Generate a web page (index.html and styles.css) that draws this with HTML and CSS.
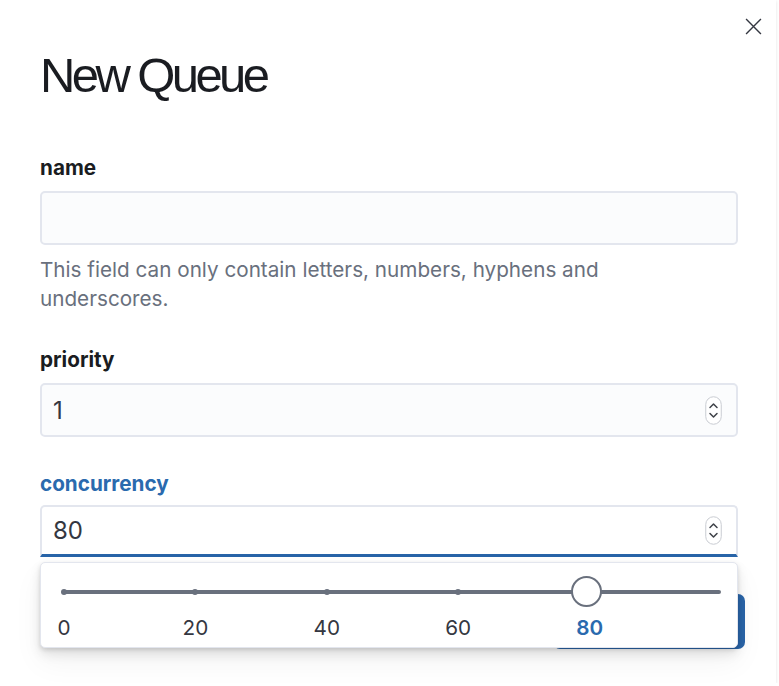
FILE: index.html
```html
<!DOCTYPE html>
<html lang="en">
<head>
    <meta charset="UTF-8">
    <meta name="viewport" content="width=device-width, initial-scale=1.0">
    <title>New Queue</title>
    <link rel="stylesheet" href="styles.css">
</head>
<body>
    <div class="modal">
        <button class="close" aria-label="Close">
            <svg width="17" height="17" viewBox="0 0 16 16"><path d="M1 1 L15 15 M15 1 L1 15" stroke="#343741" stroke-width="1.3" fill="none"/></svg>
        </button>
        <h1 class="title">New Queue</h1>

        <form class="form">
            <div class="row">
                <label class="label" for="name">name</label>
                <div class="field">
                    <input class="input" id="name" type="text">
                </div>
                <div class="help">This field can only contain letters, numbers, hyphens and underscores.</div>
            </div>

            <div class="row">
                <label class="label" for="priority">priority</label>
                <div class="field">
                    <input class="input" id="priority" type="text" value="1">
                    <span class="spinner">
                        <svg width="17" height="29" viewBox="0 0 17 29"><rect x="0.75" y="0.75" width="15.5" height="27.5" rx="7.75" fill="#fff" stroke="#c9ccd2" stroke-width="1"/><path d="M5 11.5 L8.5 8 L12 11.5 M5 17.5 L8.5 21 L12 17.5" stroke="#3f4249" stroke-width="1.5" fill="none" stroke-linecap="round" stroke-linejoin="round"/></svg>
                    </span>
                </div>
            </div>

            <div class="row focused">
                <label class="label" for="concurrency">concurrency</label>
                <div class="field">
                    <input class="input" id="concurrency" type="text" value="80">
                    <span class="spinner">
                        <svg width="17" height="29" viewBox="0 0 17 29"><rect x="0.75" y="0.75" width="15.5" height="27.5" rx="7.75" fill="#fff" stroke="#c9ccd2" stroke-width="1"/><path d="M5 11.5 L8.5 8 L12 11.5 M5 17.5 L8.5 21 L12 17.5" stroke="#3f4249" stroke-width="1.5" fill="none" stroke-linecap="round" stroke-linejoin="round"/></svg>
                    </span>
                </div>
                <div class="popover">
                    <div class="range">
                        <div class="track"></div>
                        <span class="tick" style="left: 0%"></span>
                        <span class="tick" style="left: 20%"></span>
                        <span class="tick" style="left: 40%"></span>
                        <span class="tick" style="left: 60%"></span>
                        <span class="thumb" style="left: 80%"></span>
                    </div>
                    <div class="ticks">
                        <span class="tick-label" style="left: 0%">0</span>
                        <span class="tick-label" style="left: 20%">20</span>
                        <span class="tick-label" style="left: 40%">40</span>
                        <span class="tick-label" style="left: 60%">60</span>
                        <span class="tick-label active" style="left: 80%">80</span>
                    </div>
                </div>
            </div>
        </form>

        <div class="footer">
            <button class="button primary" type="button">Create</button>
        </div>
    </div>
</body>
</html>
```

FILE: styles.css
```css
body {
    font-family: Inter, "Noto Sans", sans-serif;
    margin: 0;
    background-color: #fff;
    color: #343741;
}
.modal {
    position: relative;
    width: 776px;
    height: 683px;
    padding: 46px 38px 0 40px;
    box-sizing: border-box;
    background-color: #fff;
    box-shadow: 0 1px 3px rgba(0, 0, 0, 0.12);
    overflow: hidden;
}
.close {
    position: absolute;
    top: 14px;
    right: 11px;
    width: 24px;
    height: 24px;
    padding: 0;
    border: none;
    background: none;
    display: flex;
    align-items: center;
    justify-content: center;
    cursor: pointer;
}
.title {
    margin: 0;
    font-family: "Liberation Sans", Arial, sans-serif;
    font-weight: 400;
    font-size: 49px;
    line-height: 58px;
    letter-spacing: -3.6px;
    color: #1a1c21;
}
.form {
    margin-top: 52px;
}
.row {
    position: relative;
    margin-bottom: 35px;
}
.row:last-child {
    margin-bottom: 0;
}
.label {
    display: block;
    font-size: 20.7px;
    font-weight: 700;
    line-height: 24px;
    color: #1a1c21;
    margin-bottom: 11px;
}
.row.focused .label {
    color: #2a6aae;
    margin-bottom: 9px;
}
.field {
    display: flex;
    align-items: center;
    height: 54px;
    padding: 0 14px 0 11px;
    box-sizing: border-box;
    background-color: #fbfcfd;
    border: 2px solid #e3e6ee;
    border-radius: 5px;
}
.row.focused .field {
    height: 52px;
    background-color: #fff;
    border-bottom: 3px solid #2864a8;
    border-radius: 5px 5px 0 0;
}
.input {
    flex: 1;
    min-width: 0;
    border: none;
    outline: none;
    background: transparent;
    padding: 0;
    font-family: Inter, "Noto Sans", sans-serif;
    font-size: 24px;
    color: #343741;
}
.spinner {
    display: flex;
}
.help {
    max-width: 670px;
    margin-top: 10px;
    font-size: 20.7px;
    line-height: 29px;
    color: #69707d;
}
.popover {
    position: absolute;
    top: calc(100% + 5px);
    left: 0;
    right: 0;
    height: 86px;
    box-sizing: border-box;
    padding: 18px 16px 0 23px;
    background-color: #fff;
    border: 1px solid #e3e6ee;
    border-radius: 5px;
    box-shadow: 0 6px 12px rgba(0, 0, 0, 0.1), 0 2px 4px rgba(0, 0, 0, 0.12), 0 14px 30px rgba(0, 0, 0, 0.05);
    z-index: 2;
}
.range {
    position: relative;
    height: 22px;
}
.track {
    position: absolute;
    top: 9px;
    left: -1px;
    right: 0;
    height: 4px;
    border-radius: 2px;
    background-color: #69707d;
}
.tick {
    position: absolute;
    top: 8px;
    width: 6px;
    height: 6px;
    margin-left: -3px;
    border-radius: 50%;
    background-color: #69707d;
}
.thumb {
    position: absolute;
    top: -5px;
    width: 31px;
    height: 31px;
    margin-left: -19px;
    box-sizing: border-box;
    border: 2px solid #69707d;
    border-radius: 50%;
    background-color: #fff;
}
.ticks {
    position: relative;
    height: 30px;
    margin-top: 10px;
}
.tick-label {
    position: absolute;
    top: 0;
    transform: translateX(-50%);
    font-size: 20.7px;
    line-height: 30px;
    color: #343741;
}
.tick-label.active {
    color: #2a6aae;
    font-weight: 600;
}
.footer {
    display: flex;
    justify-content: flex-end;
    padding-top: 37px;
    margin-right: -7px;
}
.button {
    width: 192px;
    height: 55px;
    border: none;
    border-radius: 7px;
    font-family: Inter, "Noto Sans", sans-serif;
    font-size: 20.7px;
    font-weight: 500;
    cursor: pointer;
}
.button.primary {
    background-color: #2a65a9;
    color: #fff;
}
```
